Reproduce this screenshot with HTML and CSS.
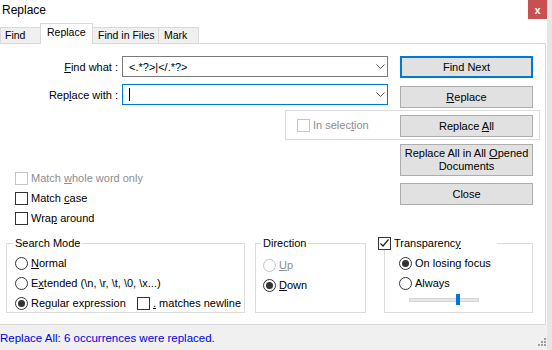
FILE: index.html
```html
<!DOCTYPE html>
<html lang="en">
<head>
  <meta charset="UTF-8" />
  <title>Replace</title>
  <link rel="stylesheet" href="styles.css">
</head>
<body>
  <div class="window">
    <div class="titlebar">
      <span class="title">Replace</span>
      <span class="close">x</span>
    </div>

    <div class="tabs">
      <div class="tab tab-find">Find</div>
      <div class="tab tab-replace active">Replace</div>
      <div class="tab tab-files">Find in Files</div>
      <div class="tab tab-mark">Mark</div>
    </div>

    <div class="panel">
      <div class="top">
        <div class="fields">
          <div class="field-row">
            <label class="field-label"><u>F</u>ind what :</label>
            <div class="combo">
              <span class="combo-text">&lt;.*?&gt;|&lt;/.*?&gt;</span>
              <svg class="chevron" width="9" height="5" viewBox="0 0 9 5"><path d="M0.5 0.5 L4.5 4.5 L8.5 0.5" fill="none" stroke="#555" stroke-width="1"/></svg>
            </div>
          </div>
          <div class="field-row">
            <label class="field-label">Rep<u>l</u>ace with :</label>
            <div class="combo focus">
              <span class="combo-text"><span class="caret"></span></span>
              <svg class="chevron" width="9" height="5" viewBox="0 0 9 5"><path d="M0.5 0.5 L4.5 4.5 L8.5 0.5" fill="none" stroke="#555" stroke-width="1"/></svg>
            </div>
          </div>

          <div class="options">
            <div class="check disabled"><span class="box"></span><span>Match <u>w</u>hole word only</span></div>
            <div class="check"><span class="box"></span><span>Match <u>c</u>ase</span></div>
            <div class="check"><span class="box"></span><span>Wra<u>p</u> around</span></div>
          </div>
        </div>

        <div class="buttons">
          <div class="btn default"><span>Find Next</span></div>
          <div class="btn"><span><u>R</u>eplace</span></div>
          <div class="btn"><span>Replace <u>A</u>ll</span></div>
          <div class="btn tall"><span>Replace All in All <u>O</u>pened<br>Documents</span></div>
          <div class="btn"><span>Close</span></div>
        </div>

        <!-- frame drawn round the Replace All button -->
        <div class="selection-frame">
          <div class="check disabled"><span class="box"></span><span>In selec<u>t</u>ion</span></div>
        </div>
      </div>

      <div class="groups">
        <fieldset class="group search">
          <legend>Search Mode</legend>
          <div class="check"><span class="radio"></span><span><u>N</u>ormal</span></div>
          <div class="check"><span class="radio"></span><span>E<u>x</u>tended (\n, \r, \t, \0, \x...)</span></div>
          <div class="check">
            <span class="regex"><span class="radio on"></span><span>Re<u>g</u>ular expression</span></span>
            <span class="box"></span><span><u>.</u> matches newline</span>
          </div>
        </fieldset>

        <fieldset class="group direction">
          <legend>Direction</legend>
          <div class="check disabled"><span class="radio"></span><span><u>U</u>p</span></div>
          <div class="check"><span class="radio on"></span><span><u>D</u>own</span></div>
        </fieldset>

        <fieldset class="group transparency">
          <legend>
            <span class="box checked">
              <svg width="11" height="11" viewBox="0 0 11 11"><path d="M1.5 5.5 L4 8 L9.5 1.5" fill="none" stroke="#222" stroke-width="1.2"/></svg>
            </span><span>Transparenc<u>y</u></span>
          </legend>
          <div class="check"><span class="radio on"></span><span>On losing focus</span></div>
          <div class="check"><span class="radio"></span><span>Always</span></div>
          <div class="slider">
            <div class="track"><span class="thumb"></span></div>
          </div>
        </fieldset>
      </div>
    </div>

    <div class="statusbar">
      <span class="status-text">Replace All: 6 occurrences were replaced.</span>
      <svg class="grip" width="9" height="9" viewBox="0 0 9 9">
        <rect x="6" y="0" width="2" height="2" fill="#a0a0a0"/>
        <rect x="3" y="3" width="2" height="2" fill="#a0a0a0"/>
        <rect x="6" y="3" width="2" height="2" fill="#a0a0a0"/>
        <rect x="0" y="6" width="2" height="2" fill="#a0a0a0"/>
        <rect x="3" y="6" width="2" height="2" fill="#a0a0a0"/>
        <rect x="6" y="6" width="2" height="2" fill="#a0a0a0"/>
      </svg>
    </div>
  </div>
</body>
</html>
```

FILE: styles.css
```css
* {
  box-sizing: border-box;
}

body {
  margin: 0;
  background: #e6e6e6;
  color: #000;
  font-family: "Liberation Sans", Arial, sans-serif;
  font-size: 11px;
}

u {
  text-decoration-thickness: 1px;
  text-underline-offset: 1px;
}

.window {
  width: 547px;
  height: 350px;
  background: #fff;
  display: flex;
  flex-direction: column;
}

/* title bar */
.titlebar {
  height: 23px;
  flex: none;
  display: flex;
  justify-content: space-between;
  align-items: flex-start;
}

.title {
  font-size: 12px;
  line-height: 14px;
  padding: 3px 0 0 2px;
}

.close {
  width: 19px;
  height: 19px;
  background: #c85050;
  color: #fff;
  font-weight: bold;
  font-size: 11px;
  display: flex;
  align-items: center;
  justify-content: center;
}

/* tabs */
.tabs {
  height: 20px;
  flex: none;
  display: flex;
  align-items: flex-end;
  position: relative;
  z-index: 1;
}

.tab {
  height: 16px;
  line-height: 15px;
  padding-left: 5px;
  border: 1px solid #d9d9d9;
  border-bottom: none;
  background: #f0f0f0;
  margin-right: -1px;
  font-size: 10.5px;
  white-space: nowrap;
}

.tab.active {
  height: 21px;
  line-height: 17px;
  padding-left: 6px;
  margin-bottom: -1px;
  background: #fff;
}

.tab-find { width: 41px; padding-left: 4px; }
.tab-replace { width: 53px; }
.tab-files { width: 67px; }
.tab-mark { width: 41px; }

.panel {
  width: 546px;
  flex: 1;
  border-top: 1px solid #d9d9d9;
  border-right: 1px solid #d9d9d9;
  border-bottom: 1px solid #d9d9d9;
}

/* upper part: fields and buttons */
.top {
  display: flex;
  padding-top: 12px;
  position: relative;
}

.fields {
  width: 400px;
}

.field-row {
  display: flex;
  align-items: center;
  height: 21px;
}

.field-row + .field-row {
  margin-top: 7px;
}

.field-label {
  width: 118px;
  text-align: right;
}

.combo {
  width: 266px;
  height: 21px;
  margin-left: 4px;
  border: 1px solid #7a7a7a;
  display: flex;
  align-items: center;
  padding-left: 6px;
  background: #fff;
}

.combo.focus {
  border-color: #0078d7;
}

.combo-text {
  flex: 1;
  display: flex;
  align-items: center;
}

.caret {
  width: 1px;
  height: 13px;
  background: #000;
}

.chevron {
  margin-right: 2px;
}

.options {
  margin-top: 63px;
  padding-left: 15px;
}

.check {
  display: flex;
  align-items: center;
  height: 20px;
  white-space: nowrap;
}

.box {
  width: 13px;
  height: 13px;
  flex: none;
  border: 1px solid #333;
  background: #fff;
  margin-right: 3px;
  display: flex;
  align-items: center;
  justify-content: center;
}

.radio {
  width: 13px;
  height: 13px;
  flex: none;
  border: 1px solid #333;
  border-radius: 50%;
  background: #fff;
  margin-right: 3px;
  display: flex;
  align-items: center;
  justify-content: center;
}

.radio.on::after {
  content: "";
  width: 7px;
  height: 7px;
  border-radius: 50%;
  background: #333;
}

.disabled {
  color: #8d8d8d;
}

.disabled .box,
.disabled .radio {
  border-color: #c4c4c4;
}

/* buttons column */
.buttons {
  width: 133px;
  display: flex;
  flex-direction: column;
  gap: 7px;
}

.btn {
  height: 22px;
  background: #e1e1e1;
  border: 1px solid #adadad;
  display: flex;
  align-items: center;
  justify-content: center;
  text-align: center;
  line-height: 13px;
}

.btn.default {
  border: 2px solid #0078d7;
  margin-bottom: 1px;
}

.btn.tall {
  height: 32px;
}

.selection-frame {
  position: absolute;
  top: 66px;
  left: 285px;
  width: 255px;
  height: 30px;
  border: 1px solid #dcdcdc;
  padding: 4px 0 0 11px;
}

/* group boxes */
.groups {
  display: flex;
  align-items: flex-start;
  margin-top: 8px;
  padding-left: 6px;
}

.group {
  margin: 0;
  height: 77px;
  min-width: 0;
  border: 1px solid #dcdcdc;
  padding: 3px 0 0 8px;
}

.group legend {
  padding: 0 2px;
  margin-left: -2px;
  height: 14px;
  line-height: 14px;
}

.search {
  width: 239px;
}

.regex {
  display: flex;
  align-items: center;
  width: 122px;
}

.direction {
  width: 111px;
  margin-left: 10px;
  padding: 5px 0 0 7px;
}

.transparency {
  width: 149px;
  margin-left: 18px;
  padding: 3px 0 0 14px;
}

.transparency legend {
  display: flex;
  align-items: center;
  width: 119px;
  margin-left: -21px;
  padding: 0;
}

.slider {
  height: 13px;
  display: flex;
  align-items: center;
  padding-left: 10px;
}

.track {
  width: 70px;
  height: 4px;
  background: #e7e7e7;
  border: 1px solid #d6d6d6;
  position: relative;
}

.thumb {
  position: absolute;
  left: 46px;
  top: -5px;
  width: 4px;
  height: 11px;
  background: #0078d7;
}

/* status bar */
.statusbar {
  height: 25px;
  flex: none;
  background: #f0f0f0;
  display: flex;
  justify-content: space-between;
  align-items: center;
}

.status-text {
  color: #0000e6;
  font-size: 11.5px;
}

.grip {
  align-self: flex-end;
  margin: 0 0 3px 0;
}
```
